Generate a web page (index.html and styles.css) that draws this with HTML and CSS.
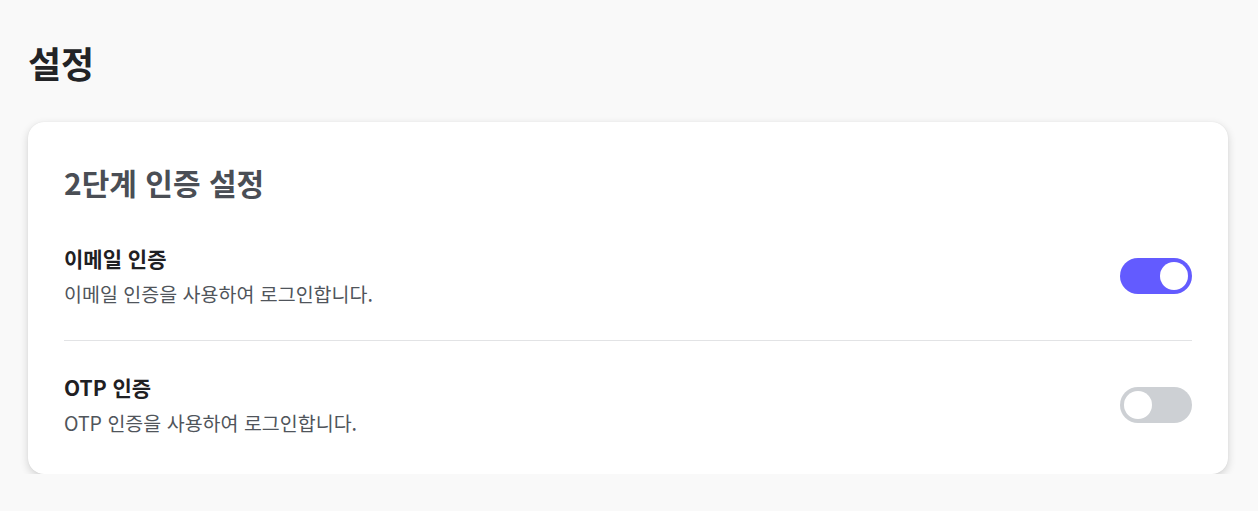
FILE: index.html
```html
<!DOCTYPE html>
<html lang="ko">
<head>
<meta charset="utf-8">
<title>설정</title>
<link rel="stylesheet" href="styles.css">
</head>
<body>
<main class="page">
  <h1 class="page-title">설정</h1>
  <section class="card">
    <h2 class="card-title">2단계 인증 설정</h2>
    <div class="row">
      <div class="row-text">
        <div class="row-title">이메일 인증</div>
        <div class="row-desc">이메일 인증을 사용하여 로그인합니다.</div>
      </div>
      <span class="toggle on"><span class="knob"></span></span>
    </div>
    <div class="row">
      <div class="row-text">
        <div class="row-title">OTP 인증</div>
        <div class="row-desc">OTP 인증을 사용하여 로그인합니다.</div>
      </div>
      <span class="toggle"><span class="knob"></span></span>
    </div>
  </section>
</main>
</body>
</html>
```

FILE: styles.css
```css
* { box-sizing: border-box; }
html, body {
  margin: 0;
  background: #f9f9f9;
  font-family: "Noto Sans CJK KR", "Noto Sans", sans-serif;
}
.page {
  padding: 38px 30px 0 28px;
}
.page-title {
  margin: 0 0 36px;
  font-size: 36px;
  line-height: 48px;
  font-weight: 700;
  color: #222326;
}
.card {
  width: 1200px;
  background: #fff;
  border-radius: 16px;
  box-shadow: 0 3px 8px rgba(0,0,0,0.16), 0 0 1px rgba(0,0,0,0.1);
  padding: 40px 36px 38px;
}
.card-title {
  margin: 0 0 10px;
  font-size: 30px;
  line-height: 40px;
  font-weight: 700;
  color: #4a4e55;
}
.row {
  display: flex;
  align-items: center;
  justify-content: space-between;
  padding: 32px 0 33px;
}
.row + .row {
  border-top: 1px solid #e2e3e5;
}
.row:last-child {
  padding-bottom: 0;
}
.row-text {
  display: flex;
  flex-direction: column;
  gap: 9px;
}
.row-title {
  font-size: 21px;
  line-height: 28px;
  font-weight: 700;
  color: #1f2023;
}
.row-desc {
  font-size: 19.5px;
  line-height: 26px;
  color: #50555b;
}
.toggle {
  width: 72px;
  height: 36px;
  border-radius: 18px;
  background: #cdd0d4;
  padding: 4px;
  display: flex;
}
.toggle.on {
  background: #635bff;
  justify-content: flex-end;
}
.knob {
  width: 28px;
  height: 28px;
  border-radius: 50%;
  background: #fff;
}
```
